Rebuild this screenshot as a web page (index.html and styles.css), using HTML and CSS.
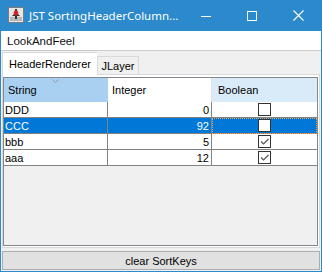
FILE: index.html
```html
<!DOCTYPE html>
<html lang="en">
<head>
  <meta charset="UTF-8" />
  <title>JST SortingHeaderColumn</title>
  <link rel="stylesheet" href="styles.css">
</head>
<body>

<div class="window">
  <div class="titlebar">
    <svg class="app-icon" width="16" height="16" viewBox="0 0 16 16">
      <rect x="0.5" y="0.5" width="15" height="15" fill="#e6e6e6" stroke="#7c7c7c"/>
      <rect x="2" y="10" width="12" height="4" fill="#b8b8b8"/>
      <path d="M4 9 L8 5 L12 9 Z" fill="#333"/>
      <rect x="7" y="2" width="2" height="10" fill="#333"/>
      <circle cx="8" cy="6" r="2.4" fill="#d8222a"/>
    </svg>
    <span class="title">JST SortingHeaderColumn...</span>
    <div class="caption-buttons">
      <span class="cap-btn">
        <svg width="10" height="10" viewBox="0 0 10 10"><line x1="0" y1="5.5" x2="10" y2="5.5" stroke="#fff" stroke-width="1"/></svg>
      </span>
      <span class="cap-btn">
        <svg width="10" height="10" viewBox="0 0 10 10"><rect x="0.5" y="0.5" width="9" height="9" fill="none" stroke="#fff" stroke-width="1"/></svg>
      </span>
      <span class="cap-btn">
        <svg width="11" height="11" viewBox="0 0 11 11"><path d="M0.5 0.5 L10.5 10.5 M10.5 0.5 L0.5 10.5" stroke="#fff" stroke-width="1.1"/></svg>
      </span>
    </div>
  </div>

  <div class="menubar">
    <span class="menu">LookAndFeel</span>
  </div>

  <div class="content">
    <div class="tabs">
      <div class="tab active">HeaderRenderer</div>
      <div class="tab">JLayer</div>
    </div>

    <div class="tab-panel">
      <div class="scroll-pane">
        <div class="table-header">
          <div class="th col-string sorted">
            String
            <svg class="sort-icon" width="7" height="4" viewBox="0 0 7 4"><path d="M0.5 0.5 L3.5 3.5 L6.5 0.5" fill="none" stroke="#8a9aa8" stroke-width="1"/></svg>
          </div>
          <div class="th col-integer">Integer</div>
          <div class="th col-boolean hover">Boolean</div>
        </div>

        <div class="row">
          <div class="td col-string">DDD</div>
          <div class="td col-integer num">0</div>
          <div class="td col-boolean"><span class="check"></span></div>
        </div>
        <div class="row selected">
          <div class="td col-string">CCC</div>
          <div class="td col-integer num">92</div>
          <div class="td col-boolean focused"><span class="check"></span></div>
        </div>
        <div class="row">
          <div class="td col-string">bbb</div>
          <div class="td col-integer num">5</div>
          <div class="td col-boolean"><span class="check checked">
            <svg width="11" height="11" viewBox="0 0 11 11"><path d="M2 5.5 L4.5 8 L9.5 3" fill="none" stroke="#555" stroke-width="1.2"/></svg>
          </span></div>
        </div>
        <div class="row">
          <div class="td col-string">aaa</div>
          <div class="td col-integer num">12</div>
          <div class="td col-boolean"><span class="check checked">
            <svg width="11" height="11" viewBox="0 0 11 11"><path d="M2 5.5 L4.5 8 L9.5 3" fill="none" stroke="#555" stroke-width="1.2"/></svg>
          </span></div>
        </div>
      </div>
    </div>

    <button class="clear-btn">clear SortKeys</button>
  </div>
</div>

</body>
</html>
```

FILE: styles.css
```css
* {
  box-sizing: border-box;
}
body {
  margin: 0;
  background: #fff;
  font-family: "Liberation Sans", Arial, sans-serif;
  font-size: 11px;
  color: #000;
}
.window {
  width: 322px;
  height: 272px;
  border: 1px solid #2b89cc;
  border-top: 0;
  background: #f0f0f0;
  display: flex;
  flex-direction: column;
}
.titlebar {
  height: 31px;
  flex: none;
  background: #2b89cc;
  color: #fff;
  display: flex;
  align-items: center;
}
.app-icon {
  margin-left: 7px;
  margin-top: -1px;
}
.title {
  margin-left: 5px;
  font-family: "Noto Sans", sans-serif;
  font-size: 11.5px;
  white-space: nowrap;
}
.caption-buttons {
  margin-left: auto;
  display: flex;
  height: 100%;
}
.cap-btn {
  width: 46px;
  display: flex;
  align-items: center;
  justify-content: center;
}
.cap-btn svg {
  display: block;
}
.menubar {
  height: 20px;
  flex: none;
  background: #fff;
  border-bottom: 1px solid #cccccc;
  display: flex;
  align-items: center;
}
.menu {
  padding-left: 6px;
  font-size: 11.5px;
  color: #111;
}
.content {
  flex: 1;
  display: flex;
  flex-direction: column;
  padding: 1px;
  min-height: 0;
}
.tabs {
  height: 22px;
  flex: none;
  display: flex;
  align-items: flex-start;
}
.tab {
  height: 18px;
  margin-top: 4px;
  width: 42px;
  border: 1px solid #d9d9d9;
  border-bottom: 0;
  background: #f0f0f0;
  display: flex;
  align-items: center;
  justify-content: center;
  white-space: nowrap;
}
.tab.active {
  position: relative;
  z-index: 1;
  width: 95px;
  height: 23px;
  margin-top: 0;
  background: #fff;
  border-right: 0;
}
.tab-panel {
  flex: 1;
  display: flex;
  background: #fff;
  border: 1px solid #d9d9d9;
  padding: 2px 1px 1px 0;
  min-height: 0;
}
.scroll-pane {
  flex: 1;
  border: 1px solid #828790;
  background: #f0f0f0;
}
.table-header,
.row {
  display: flex;
}
.col-string,
.col-integer {
  width: 104px;
}
.col-boolean {
  width: 105px;
}
.th {
  height: 24px;
  display: flex;
  align-items: center;
  padding-left: 4px;
  background: #fff;
}
.th.sorted {
  position: relative;
  background: #a9d0f0;
}
.th.col-integer {
  border-right: 1px solid #e3e3e3;
}
.th.col-boolean {
  padding-left: 6px;
}
.th.hover {
  background: #d9eaf9;
}
.sort-icon {
  position: absolute;
  left: 48px;
  top: 1px;
}
.td {
  height: 16px;
  background: #fff;
  border-right: 1px solid #828282;
  border-bottom: 1px solid #828282;
  padding-left: 1px;
  display: flex;
  align-items: center;
  white-space: nowrap;
}
.td.col-boolean {
  border-right: 0;
  justify-content: center;
  padding-left: 0;
}
.td.num {
  justify-content: flex-end;
  padding-right: 2px;
}
.row.selected .td {
  background: #0078d7;
  color: #fff;
}
.row.selected .td.focused {
  outline: 1px dotted #f0a050;
  outline-offset: -1px;
}
.check {
  width: 13px;
  height: 13px;
  border: 1px solid #333;
  background: #fff;
  display: flex;
  align-items: center;
  justify-content: center;
}
.check svg {
  display: block;
}
.clear-btn {
  flex: none;
  height: 19px;
  margin: 3px 0 0;
  padding: 0;
  border: 1px solid #adadad;
  background: #e1e1e1;
  font-family: "Liberation Sans", Arial, sans-serif;
  font-size: 11px;
  color: #000;
}
```
